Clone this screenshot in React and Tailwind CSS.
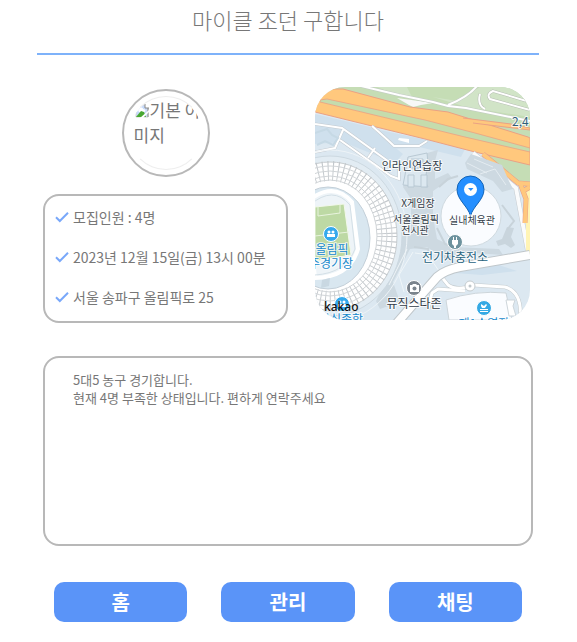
import React from "react";

const details = ["모집인원 : 4명", "2023년 12월 15일(금) 13시 00분", "서울 송파구 올림픽로 25"];

function CheckIcon() {
  return (
    <svg viewBox="0 0 14 12" className="h-3 w-3.5 shrink-0" fill="none" stroke="#79a8fa" strokeWidth="2" aria-hidden="true">
      <path d="M1 6.2 4.8 10 13 1.8" />
    </svg>
  );
}

function Avatar() {
  return (
    <div className="size-[88px] rounded-full border-2 border-[#b8b8b8] p-[5px]">
      <div className="size-full overflow-hidden rounded-full border border-transparent border-y-[#c8c8c8]/30 pl-1 text-[17px] leading-[25px]">
        <svg viewBox="0 0 16 16" className="inline-block size-4 align-[-2px]" aria-hidden="true">
          <path d="M3 2h8l3 3v9H2V3z" fill="#c7dafa" stroke="#d5d5d5" />
          <path d="M4 7c0-3 5-3 5-1 3 0 3 3 1 3H5z" fill="#fff" />
          <path d="m2 14 5-6 3 1 2 5z" fill="#49a832" />
          <path d="M11 1v4h4" fill="#fff" stroke="#888" />
          <path d="M14 5v9" fill="none" stroke="#888" />
          <path d="M6 15 15 7v2l-6 6z" fill="#fff" />
        </svg>
        기본 이미지
      </div>
    </div>
  );
}

function LocationMap() {
  return (
    <svg
      viewBox="0 0 215 233"
      className="block w-full rounded-[30px]"
      role="img"
      aria-label="실내체육관 지도"
      fontFamily="'Noto Sans CJK KR', sans-serif"
    >
      <rect width="215" height="233" fill="#dce8f1" />
      <g fill="#cfe0ed">
        <path d="M0 27 55 40 88 67 80 76 28 55 0 57z" />
        <path d="M60 42 112 53 150 62 146 70 104 60 78 62z" />
        <path d="M140 186 184 178 202 184 167 188z" />
      </g>
      <g fill="#cdd9e1">
        <path d="M112 66 123 63 120 74 120 92 133 86 137 91 118 104 118 130 122 152 138 160 184 162 188 168 160 166 130 172 112 160 95 162 78 195 85 215 65 222 61 214 72 191 84 160 82 150 96 148 96 112 88 100 92 88z" />
      </g>

      {/* green belt and expressway */}
      <path d="M0 0H215V104L166 65 110 28 0 0Z" fill="#c5ddb5" />
      <path d="M62 0H92L98 12 86 10zM118 10 142 14 165 0H215V30L151 20z" fill="#d1e4c7" />
      <path d="M82 11 118 16 106 18 98 20 94 18z" fill="#f7f8f7" />
      <path d="M46 -1 84 8 118 15 133 19 151 21 215 34M133 18Q153 10 162 -1" fill="none" stroke="#c3cac6" strokeWidth="3" />
      <path d="M46 -1 84 8 118 15 133 19 151 21 215 34M133 18Q153 10 162 -1" fill="none" stroke="#fff" strokeWidth="2" />
      <path d="M165 7Q162 18 170 22M215 15 178 4Q171 7 175 12L215 23" fill="none" stroke="#b5bcb3" strokeWidth="3" />
      <path d="M165 7Q162 18 170 22M215 15 178 4Q171 7 175 12L215 23" fill="none" stroke="#fff" strokeWidth="2" />
      <path d="M0 2 28 2 95 20 133 25 213 50 215 51V78L160 65 110 52 0 25z" fill="#ffc87d" stroke="#eaa184" strokeWidth="1" />
      <path d="M148 31 196 37 215 41V43L182 39 158 36" fill="#ffc87d" stroke="#eaa184" strokeWidth="1" />
      <path d="M5 13 12 12 110 33 160 46 215 61V65L150 50 105 39 5 15z" fill="#c5dcad" stroke="#eaa184" strokeWidth=".8" />
      <path d="M158 66 201 101 213 165" fill="none" stroke="#c7cdd2" strokeWidth="5" />
      <path d="M158 66 201 101 213 165" fill="none" stroke="#fafbfc" strokeWidth="4" />
      <path d="M211 101V166H215V99z" fill="#fff4b5" />
      <path d="M168 67 203 96 215 97M205 96 211 112 210 136M208 104 215 100" fill="none" stroke="#e7a08a" strokeWidth="5" />
      <path d="M168 67 203 96 215 97M205 96 211 112 210 136M208 104 215 100" fill="none" stroke="#ffc87d" strokeWidth="4" />

      {/* paths and courts */}
      <g fill="none" stroke="#c3cad0" strokeWidth="3">
        <path d="M0 37 27 41 84 82V92L76 89 25 53M28 43 20 61 0 65M60 61 53 71" />
        <path d="M57 39Q73 53 79 59H104L112 54" />
      </g>
      <g fill="none" stroke="#fff" strokeWidth="2">
        <path d="M0 37 27 41 84 82V92L76 89 25 53M28 43 20 61 0 65M60 61 53 71" />
        <path d="M57 39Q73 53 79 59H104L112 54" />
      </g>
      <path d="M0 46 12 42 17 48 23 51 18 58 10 54 2 58" stroke="#c6d9e5" strokeWidth="2" fill="none" />
      <path d="m84 51 10 1v4l-11-3z" fill="#fff" />
      <g fill="#dce8f0" stroke="#b9c9d4">
        <path d="M93 70 112 66 113 76 110 94 113 100 88 98 90 88z" />
        <path d="M96 72h12v9H96zM93 88h6v12h-6zM106 88h6v12h-6z" />
      </g>
      <path d="M156 67 187 78 193 92 198 102 187 105 178 94 152 82 150 76z" fill="#cdd9e1" />
      <path d="M152 76 172 86M159 72 178 80M165 87 180 82 191 98" fill="none" stroke="#e4ecf1" />
      <path d="M181 154 187 152 192 140 199 141 196 150 200 158 196 161 190 157 183 159z" fill="#c9d5dd" />
      <path d="M124 100 133 92 143 89M122 141 130 157 144 162M187 118 199 134 192 143M99 160 113 162 116 176" fill="none" stroke="#c8d3da" strokeWidth="2" />
      <path d="M98 165 84 188 89 205M74 198 92 162M100 166 113 168 124 184" fill="none" stroke="#eff5f8" strokeWidth="1" />

      {/* olympic stadium */}
      <ellipse cx="15" cy="149" rx="77" ry="86" fill="none" stroke="#edf3f7" />
      <ellipse cx="15" cy="149" rx="72" ry="80" fill="#e2ecf3" stroke="#ccd8e0" />
      <ellipse cx="15" cy="149" rx="67" ry="74" fill="#fff" stroke="#c7cccf" />
      <ellipse cx="15" cy="149" rx="57" ry="65" fill="none" stroke="#c3c8cc" strokeWidth="20" strokeDasharray="1 4" />
      <g fill="none" stroke="#d0d4d7">
        <ellipse cx="15" cy="149" rx="62" ry="70" />
        <ellipse cx="15" cy="149" rx="57" ry="65" />
        <ellipse cx="15" cy="149" rx="52" ry="60" />
        <ellipse cx="15" cy="149" rx="47" ry="56" />
      </g>
      <ellipse cx="13" cy="151" rx="42" ry="51" fill="#d9e7f0" stroke="#c3cfd8" />
      <path d="M-8 115Q18 93 37 115L43 162Q35 190 0 191z" fill="#eef4f8" stroke="#fff" strokeWidth="4" />
      <path d="M-5 118Q18 98 35 118L40 162Q31 186 0 188" fill="none" stroke="#d3dfe6" />
      <path d="M0 120 29 117 36 168 0 174z" fill="#bdd9a4" stroke="#f2f8eb" />
      <path d="M0 149 34 145M3 120v9l22-3v-9" fill="none" stroke="#e8f3de" />
      <path d="M7 193 15 191 14 199 6 201z" fill="#c9d8e2" />

      {/* lower road and swimming pool */}
      <path d="M125 188 133 198Q140 203 154 200M113 222 117 206 123 202 150 204M158 198 190 200Q208 205 205 233" fill="none" stroke="#c3cacd" strokeWidth="4" />
      <path d="M125 188 133 198Q140 203 154 200M113 222 117 206 123 202 150 204M158 198 190 200Q208 205 205 233" fill="none" stroke="#fff" strokeWidth="3" />
      <path d="M82 236 108 206 122 190Q130 183 145 180L215 168" fill="none" stroke="#c0c7cb" strokeWidth="10" />
      <path d="M82 236 108 206 122 190Q130 183 145 180L215 168" fill="none" stroke="#fff" strokeWidth="8" />
      <circle cx="155" cy="199" r="5" fill="#fff" stroke="#c3cacd" />
      <circle cx="155" cy="199" r="1.500" fill="#c0c7cb" />
      <path d="M131 213Q160 203 191 206L197 233H134z" fill="#fafcff" stroke="#cdd5da" />
      <path d="M191 213h9l-2 6 3 10h-7z" fill="#fff" stroke="#cdd5da" />

      {/* arena and marker */}
      <circle cx="156" cy="129" r="30" fill="#fafcff" stroke="#d0dae0" />
      <path d="M155.500 129C153 119 142 113 142 102.500a13.500 13.500 0 0 1 27 0c0 10.500-11 16.500-13.500 26.500Z" fill="#258fff" stroke="#1263b5" />
      <circle cx="155.500" cy="102.500" r="6.500" fill="#fff" />
      <path d="M153 101h5.500l-2.700 3z" fill="#258fff" />

      {/* place symbols */}
      <g stroke="#fff" strokeWidth="1">
        <circle cx="16" cy="147" r="7.500" fill="#35a9ec" />
        <circle cx="27" cy="217" r="7.500" fill="#35a9ec" />
        <circle cx="169" cy="221" r="7.500" fill="#35a9e4" />
        <circle cx="140" cy="155" r="7.500" fill="#6d929e" />
        <circle cx="99" cy="201" r="7.500" fill="#7b848d" />
      </g>
      <g fill="#fff">
        <circle cx="14" cy="145" r="1.500" /><circle cx="18" cy="145" r="1.500" /><path d="M12 147h8v3h-8z" />
        <circle cx="25" cy="215" r="1.500" /><circle cx="29" cy="215" r="1.500" /><path d="M23 217h8v3h-8z" />
        <path d="M138 150h1v3h2v-3h1v3h1v4l-2 2v2h-2v-2l-2-2v-4h1z" />
        <path d="M95 198h2l1-1h3l1 1h2v7h-9z" />
        <path d="m166 217 3 2 2-2 1 1-2 3h-3l-1-2zM165 222h8v1h-8zM165 224h8v1h-8z" />
      </g>
      <circle cx="99.500" cy="201.500" r="2" fill="#7b848d" />

      <g textAnchor="middle" stroke="#fff" strokeOpacity=".8" strokeWidth="2" strokeLinejoin="round" paintOrder="stroke">
        <g fill="#333d49" fontSize="11">
          <text x="97" y="83">인라인연습장</text>
          <text x="103" y="120" fontSize="10">X게임장</text>
          <text x="101" y="136" fontSize="10">서울올림픽</text>
          <text x="100" y="147" fontSize="10">전시관</text>
          <text x="157" y="137" fontSize="10">실내체육관</text>
          <text x="99" y="221" fontSize="12">뮤직스타존</text>
        </g>
        <text x="140" y="175" fill="#27627d" fontSize="12">전기차충전소</text>
        <g fill="#1588cc" fontSize="12">
          <text x="17" y="167">올림픽</text>
          <text x="16" y="181">주경기장</text>
          <text x="26" y="237">잠실종합</text>
          <text x="169" y="241">제1수영장</text>
        </g>
        <text x="197" y="39" textAnchor="start" fill="#315f79" fontSize="12">2,4</text>
      </g>
      <text x="9" y="224" fill="#111" fontFamily="'Noto Sans', sans-serif" fontSize="12" fontWeight="500">kakao</text>
    </svg>
  );
}

export default function App() {
  return (
    <main className="bg-white pb-5 pl-[37px] pr-[38px] font-['Noto_Sans_CJK_KR',sans-serif] text-[#777]">
      <h1 className="border-b-2 border-[#7eb2fa] pb-[18px] pt-1 text-center text-[22px] font-light leading-[31px]">
        마이클 조던 구합니다
      </h1>

      <div className="px-1.5 pt-8">
        <section className="flex items-start gap-[27px] pr-[3px]">
          <div className="flex min-w-0 flex-1 flex-col items-center gap-[17px] pt-0.5">
            <Avatar />
            <ul className="flex w-full flex-col gap-5 rounded-2xl border-2 border-[#b8b8b8] px-2.5 pb-3.5 pt-[11px] text-sm leading-5">
              {details.map((detail) => (
                <li key={detail} className="flex items-center gap-1 whitespace-nowrap">
                  <CheckIcon />
                  <span>{detail}</span>
                </li>
              ))}
            </ul>
          </div>
          <div className="w-[215px] shrink-0">
            <LocationMap />
          </div>
        </section>

        <p className="mt-[33px] min-h-[190px] rounded-2xl border-2 border-[#b8b8b8] px-7 py-[13px] text-[13px] leading-[18px]">
          5대5 농구 경기합니다.
          <br />
          현재 4명 부족한 상태입니다. 편하게 연락주세요
        </p>
      </div>

      <nav className="mt-9 flex gap-[34px] px-[17px]">
        <button type="button" className="h-10 flex-1 rounded-[10px] bg-[#5a94f8] text-xl font-bold text-white">홈</button>
        <button type="button" className="h-10 flex-1 rounded-[10px] bg-[#5a94f8] text-xl font-bold text-white">관리</button>
        <button type="button" className="h-10 flex-1 rounded-[10px] bg-[#5a94f8] text-xl font-bold text-white">채팅</button>
      </nav>
    </main>
  );
}
